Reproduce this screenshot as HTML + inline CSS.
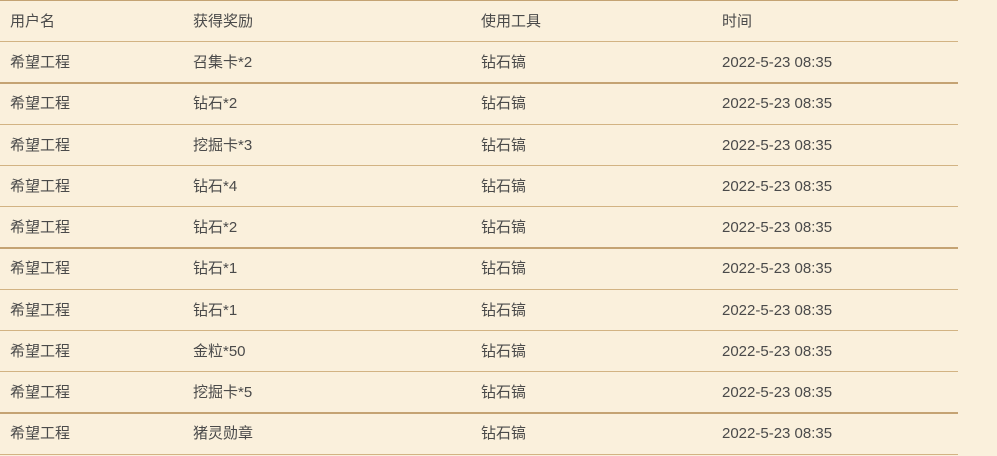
<!DOCTYPE html>
<html><head><meta charset="utf-8"><style>
html,body{margin:0;padding:0;width:997px;height:456px;background:#faf0dc;overflow:hidden;font-family:"Liberation Sans","Noto Sans CJK SC",sans-serif;font-size:15px;color:#4a4a4a}
.l{position:absolute;left:0;width:958px;background:#d2b383;height:1px}
.t{background:#c4a373;height:2px}
.r{position:absolute;left:0;width:958px;height:20px;line-height:20px;margin-top:1px}
.r span{position:absolute;top:0;white-space:nowrap}
.a{left:10px}.b{left:193px}.c{left:481px}.d{left:722px}
</style></head><body>
<div class="l" style="top:0;background:#c4a373"></div>
<div class="l" style="top:41px"></div>
<div class="l t" style="top:82px"></div>
<div class="l" style="top:124px"></div>
<div class="l" style="top:165px"></div>
<div class="l" style="top:206px"></div>
<div class="l t" style="top:247px"></div>
<div class="l" style="top:289px"></div>
<div class="l" style="top:330px"></div>
<div class="l" style="top:371px"></div>
<div class="l t" style="top:412px"></div>
<div class="l" style="top:454px"></div>

<div class="r" style="top:11px"><span class="a">用户名</span><span class="b">获得奖励</span><span class="c">使用工具</span><span class="d">时间</span></div>
<div class="r" style="top:52px"><span class="a">希望工程</span><span class="b">召集卡*2</span><span class="c">钻石镐</span><span class="d">2022-5-23 08:35</span></div>
<div class="r" style="top:93px"><span class="a">希望工程</span><span class="b">钻石*2</span><span class="c">钻石镐</span><span class="d">2022-5-23 08:35</span></div>
<div class="r" style="top:135px"><span class="a">希望工程</span><span class="b">挖掘卡*3</span><span class="c">钻石镐</span><span class="d">2022-5-23 08:35</span></div>
<div class="r" style="top:176px"><span class="a">希望工程</span><span class="b">钻石*4</span><span class="c">钻石镐</span><span class="d">2022-5-23 08:35</span></div>
<div class="r" style="top:217px"><span class="a">希望工程</span><span class="b">钻石*2</span><span class="c">钻石镐</span><span class="d">2022-5-23 08:35</span></div>
<div class="r" style="top:258px"><span class="a">希望工程</span><span class="b">钻石*1</span><span class="c">钻石镐</span><span class="d">2022-5-23 08:35</span></div>
<div class="r" style="top:300px"><span class="a">希望工程</span><span class="b">钻石*1</span><span class="c">钻石镐</span><span class="d">2022-5-23 08:35</span></div>
<div class="r" style="top:341px"><span class="a">希望工程</span><span class="b">金粒*50</span><span class="c">钻石镐</span><span class="d">2022-5-23 08:35</span></div>
<div class="r" style="top:382px"><span class="a">希望工程</span><span class="b">挖掘卡*5</span><span class="c">钻石镐</span><span class="d">2022-5-23 08:35</span></div>
<div class="r" style="top:423px"><span class="a">希望工程</span><span class="b">猪灵勋章</span><span class="c">钻石镐</span><span class="d">2022-5-23 08:35</span></div>
</body></html>
